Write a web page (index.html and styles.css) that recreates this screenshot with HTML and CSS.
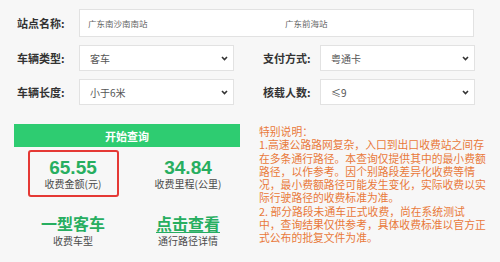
FILE: index.html
```html
<!DOCTYPE html>
<html lang="zh-CN">
<head>
  <meta charset="UTF-8">
  <meta name="viewport" content="width=device-width, initial-scale=1.0">
  <link rel="stylesheet" href="styles.css">
</head>
<body>
  <form class="query">
    <div class="row row-station">
      <label class="field-label">站点名称:</label>
      <div class="station-box">
        <span class="station-from">广东南沙南南站</span>
        <span class="station-to">广东前海站</span>
      </div>
    </div>
    <div class="row">
      <label class="field-label">车辆类型:</label>
      <div class="select">
        <span>客车</span>
        <svg class="chevron" width="7" height="5" viewBox="0 0 7 5"><path d="M1 1 L3.5 3.5 L6 1" fill="none" stroke="#333" stroke-width="1.6"/></svg>
      </div>
      <label class="field-label field-label-right">支付方式:</label>
      <div class="select">
        <span>粤通卡</span>
        <svg class="chevron" width="7" height="5" viewBox="0 0 7 5"><path d="M1 1 L3.5 3.5 L6 1" fill="none" stroke="#333" stroke-width="1.6"/></svg>
      </div>
    </div>
    <div class="row">
      <label class="field-label">车辆长度:</label>
      <div class="select">
        <span>小于6米</span>
        <svg class="chevron" width="7" height="5" viewBox="0 0 7 5"><path d="M1 1 L3.5 3.5 L6 1" fill="none" stroke="#333" stroke-width="1.6"/></svg>
      </div>
      <label class="field-label field-label-right">核载人数:</label>
      <div class="select">
        <span>≤9</span>
        <svg class="chevron" width="7" height="5" viewBox="0 0 7 5"><path d="M1 1 L3.5 3.5 L6 1" fill="none" stroke="#333" stroke-width="1.6"/></svg>
      </div>
    </div>
  </form>

  <section class="result">
    <div class="calc">
      <button type="button" class="btn-query">开始查询</button>
      <div class="stats">
        <div class="stat stat-fee">
          <div class="stat-value">65.55</div>
          <div class="stat-label">收费金额(元)</div>
        </div>
        <div class="stat">
          <div class="stat-value">34.84</div>
          <div class="stat-label">收费里程(公里)</div>
        </div>
        <div class="stat-text">
          <div class="stat-big">一型客车</div>
          <div class="stat-label">收费车型</div>
        </div>
        <div class="stat-text">
          <a href="#" class="stat-big stat-link">点击查看</a>
          <div class="stat-label">通行路径详情</div>
        </div>
      </div>
    </div>
    <div class="note">
      特别说明：<br>
      1.高速公路路网复杂，入口到出口收费站之间存<br>
      在多条通行路径。本查询仅提供其中的最小费额<br>
      路径，以作参考。因个别路段差异化收费等情<br>
      况，最小费额路径可能发生变化，实际收费以实<br>
      际行驶路径的收费标准为准。<br>
      2. 部分路段未通车正式收费，尚在系统测试<br>
      中，查询结果仅供参考，具体收费标准以官方正<br>
      式公布的批复文件为准。
    </div>
  </section>
</body>
</html>
```

FILE: styles.css
```css
body {
  margin: 0;
  background-color: #f7f7f7;
  font-family: "Noto Sans CJK SC", "Liberation Sans", sans-serif;
  color: #333;
}

.query {
  padding: 9px 0 0 17px;
  display: flex;
  flex-direction: column;
  gap: 8px;
}

.row {
  display: flex;
  align-items: center;
  height: 26px;
}

.row-station {
  height: 28px;
}

.field-label {
  width: 62px;
  font-size: 11px;
  font-weight: bold;
  color: #333;
}

.field-label-right {
  width: 57px;
  margin-left: 29px;
}

.station-box {
  width: 395px;
  height: 28px;
  box-sizing: border-box;
  border: 1px solid #e2e2e2;
  background-color: #fff;
  display: flex;
  align-items: center;
  font-size: 8.5px;
  color: #666;
}

.station-from {
  width: 197px;
  padding-left: 8px;
}

.select {
  width: 155px;
  height: 26px;
  box-sizing: border-box;
  border: 1px solid #e2e2e2;
  background-color: #fff;
  display: flex;
  align-items: center;
  justify-content: space-between;
  padding: 0 5px 0 10px;
  font-size: 10px;
  color: #555;
}

.result {
  display: flex;
  gap: 19px;
  margin-top: 19px;
  padding-left: 14px;
}

.calc {
  width: 226px;
}

.btn-query {
  display: block;
  width: 226px;
  height: 23px;
  border: none;
  background-color: #2ecc71;
  color: #fff;
  font-family: inherit;
  font-size: 11px;
  font-weight: bold;
  padding: 0;
}

.stats {
  display: grid;
  grid-template-columns: 118px 112px;
  row-gap: 14px;
  margin-top: 3px;
}

.stat {
  width: 91px;
  height: 47px;
  box-sizing: border-box;
  border: 2px solid transparent;
  border-radius: 3px;
  padding-top: 5px;
  justify-self: center;
  text-align: center;
  white-space: nowrap;
}

.stat-fee {
  border-color: #e53935;
}

.stat-value {
  font-family: "Liberation Sans", Arial, sans-serif;
  font-size: 19px;
  line-height: 21px;
  font-weight: bold;
  color: #27ae60;
}

.stat-label {
  font-size: 10px;
  line-height: 12px;
  color: #4a4a4a;
}

.stat-text {
  text-align: center;
}

.stat-big {
  display: inline-block;
  font-size: 16px;
  line-height: 18px;
  font-weight: bold;
  color: #27ae60;
}

.stat-link {
  text-decoration: none;
  border-bottom: 1.5px solid #27ae60;
  line-height: 17px;
}

.note {
  width: 230px;
  font-size: 10.8px;
  line-height: 13.3px;
  color: #e9793a;
  white-space: nowrap;
  margin-top: 1px;
}
```
